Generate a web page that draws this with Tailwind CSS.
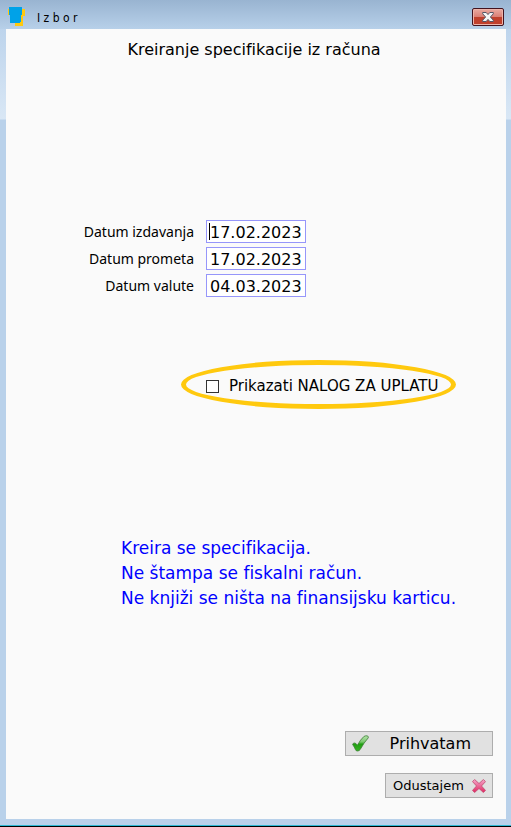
<!DOCTYPE html>
<html lang="sr">
<head>
    <meta charset="UTF-8">
    <meta name="viewport" content="width=device-width, initial-scale=1.0">
    <title>Izbor</title>
    <script src="https://cdn.jsdelivr.net/npm/@tailwindcss/browser@4"></script>
</head>
<body class="bg-black font-['DejaVu_Sans',sans-serif] text-black [font-variant-ligatures:none]">
    <div class="min-h-[calc(100vh-1px)] flex flex-col bg-[#b9d1ea] border-b border-[#2fb9d4]">
        <!-- Title bar -->
        <header class="h-[29px] shrink-0 flex items-center pl-2 pr-[7px] bg-linear-to-b from-[#99b4d1] to-[#b7d0e9]">
            <svg class="w-[18px] h-5 mt-1" viewBox="0 0 18 20" aria-hidden="true">
                <path fill="#ffc90e" d="M0 2h17v7h-2v10H7v-3H2V8H0z"/>
                <path fill="#00a2e8" d="M1 0h13v8h-1v7h-1v1H2V8H1z"/>
            </svg>
            <span class="ml-[11px] mt-[7px] text-xs font-['DejaVu_Sans_Condensed','DejaVu_Sans',sans-serif]">I z b o r</span>
            <button type="button" aria-label="Zatvori" class="ml-auto mt-1 w-8 h-[18px] flex items-center justify-center rounded-xs border border-[#43141f] bg-linear-to-b from-[#e9aaa1] from-0% via-[#dc8379] via-45% to-[#c8503c] shadow-[inset_0_0_0_1px_#eeb4aa,inset_0_-8px_0_0_#c0402c]">
                <svg class="w-3 h-[10px]" viewBox="0 0 12 10">
                    <path fill="#f4f4f4" stroke="#535666" d="M.7.5h3.5L6 2.6 7.8.5h3.5v1.3L8.4 5l2.9 3.2v1.3H7.8L6 7.4 4.2 9.5H.7V8.2L3.6 5 .7 1.8z"/>
                </svg>
            </button>
        </header>

        <div class="grow flex pb-[6px] bg-[linear-gradient(#bdd4ec,#d9e7f5_90px,#b9d1ea_91px)]">
            <main class="grow flex flex-col ml-[6px] mr-[5px] bg-[#fafafa]">
                <h1 class="mt-[9px] pr-1 text-center text-base leading-6">Kreiranje specifikacije iz računa</h1>

                <!-- Dates -->
                <div class="mt-[158px] grid grid-cols-[188px_100px] gap-x-3 gap-y-1 items-center">
                    <label for="izdavanje" class="text-right text-sm font-['Noto_Sans',sans-serif]">Datum izdavanja</label>
                    <div class="relative">
                        <input id="izdavanje" type="text" value="17.02.2023" class="block w-full h-[23px] pl-[3px] pt-[2px] text-base bg-white border border-[#9696fa] outline-none">
                        <!-- Caret -->
                        <span class="absolute left-[3px] top-[3px] w-px h-[17px] bg-black"></span>
                    </div>
                    <label for="promet" class="text-right text-sm font-['Noto_Sans',sans-serif]">Datum prometa</label>
                    <input id="promet" type="text" value="17.02.2023" class="block w-full h-[23px] pl-[3px] pt-[2px] text-base bg-white border border-[#9696fa] outline-none">
                    <label for="valuta" class="text-right text-sm font-['Noto_Sans',sans-serif]">Datum valute</label>
                    <input id="valuta" type="text" value="04.03.2023" class="block w-full h-[23px] pl-[3px] pt-[2px] text-base bg-white border border-[#9696fa] outline-none">
                </div>

                <!-- Payment order option -->
                <div class="mt-[63px] ml-[175px] w-[275px] h-[49px] flex items-center rounded-[50%] border-5 border-[#ffc90e]">
                    <label class="ml-5 mt-[3px] flex items-center text-[15px] leading-5 whitespace-nowrap">
                        <input type="checkbox" class="appearance-none w-[13px] h-[13px] mr-[10px] border border-[#333] bg-white checked:bg-[#333]">
                        Prikazati NALOG ZA UPLATU
                    </label>
                </div>

                <div class="mt-[127px] ml-[115px] text-[17px] leading-[25px] text-[#0000ff]">
                    <p>Kreira se specifikacija.</p>
                    <p>Ne štampa se fiskalni račun.</p>
                    <p>Ne knjiži se ništa na finansijsku karticu.</p>
                </div>

                <!-- Actions -->
                <div class="mt-auto mb-[21px] mr-[13px] flex flex-col items-end gap-[17px]">
                    <button type="button" class="w-[148px] h-[25px] flex items-center pl-[6px] pr-[21px] bg-[#e1e1e1] border border-[#adadad] text-base">
                        <svg class="w-[17px] h-[17px]" viewBox="0 0 17 17" aria-hidden="true">
                            <defs>
                                <linearGradient id="check" x1="0" y1="0" x2="0" y2="1">
                                    <stop offset="0" stop-color="#b5e3ac"/>
                                    <stop offset=".4" stop-color="#7cc870"/>
                                    <stop offset=".55" stop-color="#1fa010"/>
                                    <stop offset="1" stop-color="#36b324"/>
                                </linearGradient>
                            </defs>
                            <path fill="url(#check)" stroke="#3d7d36" stroke-width=".8" stroke-linejoin="round" d="M.6 9.500Q.8 8 2.500 8q1.500 0 2.900 2.200Q8.500 4.500 11.800 1.600 13.200.6 15 .8q1.800.4 1.300 2Q12 7.500 8.200 14.500 7.200 16 5.500 16T3.400 14.500Q2.500 12 .6 9.500z"/>
                        </svg>
                        <span class="ml-auto">Prihvatam</span>
                    </button>
                    <button type="button" class="w-[108px] h-[25px] flex items-center pl-[7px] pr-[6px] bg-[#e1e1e1] border border-[#adadad] text-[13px]">
                        <span>Odustajem</span>
                        <svg class="ml-auto w-[14px] h-[14px]" viewBox="0 0 14 14" aria-hidden="true">
                            <defs>
                                <linearGradient id="cross" x1="0" y1="0" x2="0" y2="1">
                                    <stop offset="0" stop-color="#f5a6cb"/>
                                    <stop offset="1" stop-color="#e02862"/>
                                </linearGradient>
                            </defs>
                            <path fill="url(#cross)" stroke="#c2476f" stroke-width=".8" stroke-linejoin="round" d="M2.600.5 7 4.500 11.400.5l2.100 2.100L9.500 7l4 4.400-2.100 2.100L7 9.500l-4.400 4-2.100-2.100L4.500 7l-4-4.400z"/>
                        </svg>
                    </button>
                </div>
            </main>
        </div>
    </div>
</body>
</html>
